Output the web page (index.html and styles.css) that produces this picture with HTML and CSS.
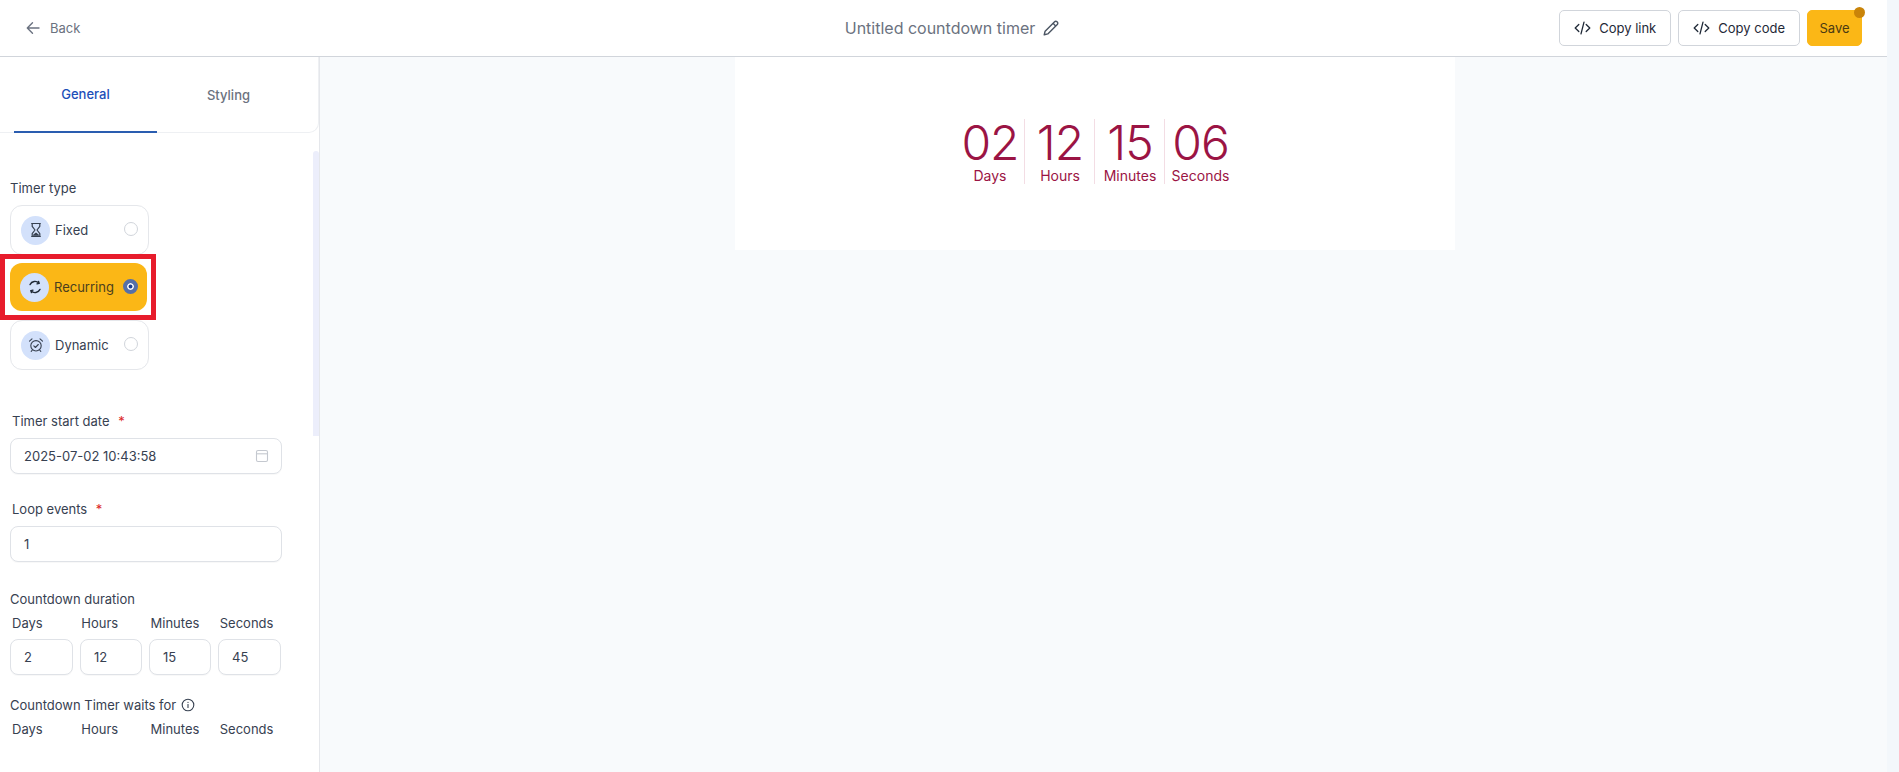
FILE: index.html
```html
<!DOCTYPE html>
<html lang="en">
<head>
  <meta charset="UTF-8">
  <title>Untitled countdown timer</title>
  <link rel="stylesheet" href="styles.css">
</head>
<body>

  <header class="topbar">
    <a class="back" href="#">
      <svg width="16" height="16" viewBox="0 0 16 16" fill="none" stroke="#6b7280" stroke-width="1.4" stroke-linecap="round" stroke-linejoin="round"><path d="M14 8H2.5M7.5 2.8 2.3 8l5.2 5.2"/></svg>
      <span>Back</span>
    </a>
    <div class="title">
      <span>Untitled countdown timer</span>
      <svg width="18" height="18" viewBox="0 0 18 18" fill="none" stroke="#4b5563" stroke-width="1.4" stroke-linejoin="round"><path d="M2.2 15.8l.9-3.6L12.6 2.7a1.6 1.6 0 0 1 2.3 0l.4.4a1.6 1.6 0 0 1 0 2.3L5.8 14.9z"/><path d="M11 4.3l2.7 2.7"/></svg>
    </div>
    <div class="actions">
      <button class="btn">
        <svg width="17" height="14" viewBox="0 0 17 14" fill="none" stroke="#1f2937" stroke-width="1.3" stroke-linecap="round" stroke-linejoin="round"><path d="M4.8 3.5 1.2 7l3.6 3.5M12.2 3.5 15.8 7l-3.6 3.5M10 1.2 7 12.8"/></svg>
        Copy link
      </button>
      <button class="btn">
        <svg width="17" height="14" viewBox="0 0 17 14" fill="none" stroke="#1f2937" stroke-width="1.3" stroke-linecap="round" stroke-linejoin="round"><path d="M4.8 3.5 1.2 7l3.6 3.5M12.2 3.5 15.8 7l-3.6 3.5M10 1.2 7 12.8"/></svg>
        Copy code
      </button>
      <button class="btn btn-save">Save<span class="dot"></span></button>
    </div>
  </header>

  <div class="main">
    <aside class="sidebar">
      <div class="tabs">
        <div class="tab active">General</div>
        <div class="tab">Styling</div>
      </div>
      <div class="scroll-thumb"></div>

      <form class="form">
        <div class="label label-type">Timer type</div>

        <div class="type-card">
          <span class="type-icon">
            <svg width="16" height="16" viewBox="0 0 16 16" fill="none" stroke="#374151" stroke-width="1.2" stroke-linejoin="round"><path d="M3.2 1.5h9.6M3.2 14.5h9.6M4.2 1.5v2.8L7 8l-2.8 3.7v2.8M11.8 1.5v2.8L9 8l2.8 3.7v2.8"/><path d="M5.5 13.2 8 11.2l2.5 2z" fill="#374151"/></svg>
          </span>
          <span class="type-name">Fixed</span>
          <span class="radio"></span>
        </div>

        <div class="highlight">
          <div class="type-card selected">
            <span class="type-icon">
              <svg width="16" height="16" viewBox="0 0 16 16" fill="none" stroke="#1f2937" stroke-width="1.3" stroke-linecap="round"><path d="M3 5.6A5.5 5.5 0 0 1 12 4.2"/><path d="M13 10.4A5.5 5.5 0 0 1 4 11.8"/><path d="M11.6 2.3l.5 2.1-2.1.5M4.4 13.7l-.5-2.1 2.1-.5" stroke-linejoin="round"/></svg>
            </span>
            <span class="type-name">Recurring</span>
            <span class="radio checked"></span>
          </div>
        </div>

        <div class="type-card">
          <span class="type-icon">
            <svg width="16" height="16" viewBox="0 0 16 16" fill="none" stroke="#374151" stroke-width="1.1" stroke-linecap="round" stroke-linejoin="round"><circle cx="8" cy="8.8" r="5.2"/><path d="M5.8 8.9l1.6 1.6 2.9-3M1.5 4.2 4 1.8M14.5 4.2 12 1.8M4.4 13l-1.2 1.4M11.6 13l1.2 1.4"/></svg>
          </span>
          <span class="type-name">Dynamic</span>
          <span class="radio"></span>
        </div>

        <div class="field field-date">
          <div class="label label-indent">Timer start date <span class="req">*</span></div>
          <div class="input">
            <span>2025-07-02 10:43:58</span>
            <svg width="14" height="14" viewBox="0 0 14 14" fill="none" stroke="#c4c8cf" stroke-width="1.1"><rect x="1.5" y="1.5" width="11" height="11" rx="1.5"/><path d="M1.5 4.8h11"/></svg>
          </div>
        </div>

        <div class="field field-loop">
          <div class="label label-indent">Loop events <span class="req">*</span></div>
          <div class="input"><span>1</span></div>
        </div>

        <div class="label label-duration">Countdown duration</div>
        <div class="units">
          <span>Days</span><span>Hours</span><span>Minutes</span><span>Seconds</span>
        </div>
        <div class="unit-inputs">
          <div class="input">2</div>
          <div class="input">12</div>
          <div class="input">15</div>
          <div class="input">45</div>
        </div>

        <div class="label label-waits">
          Countdown Timer waits for
          <svg width="14" height="14" viewBox="0 0 14 14" fill="none" stroke="#374151" stroke-width="1.1" stroke-linecap="round"><circle cx="7" cy="7" r="5.8"/><path d="M7 6.5v3"/><path d="M7 4.4v.1"/></svg>
        </div>
        <div class="units">
          <span>Days</span><span>Hours</span><span>Minutes</span><span>Seconds</span>
        </div>
      </form>
    </aside>

    <section class="preview">
      <div class="preview-card">
        <div class="timer">
          <div class="cell"><div class="num">02</div><div class="unit">Days</div></div>
          <div class="cell"><div class="num">12</div><div class="unit">Hours</div></div>
          <div class="cell"><div class="num">15</div><div class="unit">Minutes</div></div>
          <div class="cell"><div class="num">06</div><div class="unit">Seconds</div></div>
        </div>
      </div>
    </section>
  </div>

</body>
</html>
```

FILE: styles.css
```css
* {
  margin: 0;
  padding: 0;
  box-sizing: border-box;
  font-family: Inter, "Liberation Sans", sans-serif;
}

html, body {
  height: 100%;
  overflow: hidden;
}

body {
  background: #f8fafc;
  color: #374151;
  font-size: 13px;
  display: flex;
  flex-direction: column;
  border-right: 12px solid #f3f7fb;
}

/* Barra superior */
.topbar {
  height: 57px;
  flex: none;
  background: #fff;
  border-bottom: 1px solid #d1d5db;
  display: grid;
  grid-template-columns: 1fr auto 1fr;
  align-items: center;
  padding: 0 25px;
}

.back {
  display: flex;
  align-items: center;
  gap: 9px;
  color: #6b7280;
  font-size: 13px;
  text-decoration: none;
}

.title {
  display: flex;
  align-items: center;
  gap: 7px;
  color: #6b7280;
  font-size: 16px;
  margin-left: 18px;
}

.actions {
  display: flex;
  justify-content: flex-end;
  gap: 7px;
}

.btn {
  height: 36px;
  padding: 0 14px;
  display: flex;
  align-items: center;
  gap: 8px;
  background: #fff;
  border: 1px solid #d1d5db;
  border-radius: 5px;
  color: #1f2937;
  font-size: 13px;
  position: relative;
}

.btn-save {
  background: #fbb716;
  border-color: #fbb716;
  color: #4b3b12;
  width: 55px;
  justify-content: center;
  padding: 0;
}

.dot {
  position: absolute;
  top: -4px;
  right: -4px;
  width: 11px;
  height: 11px;
  border-radius: 50%;
  background: #c98409;
}

.main {
  flex: 1;
  display: flex;
  min-height: 0;
}

/* Panel lateral */
.sidebar {
  width: 320px;
  flex: none;
  background: #fff;
  border-right: 1px solid #e5e7eb;
  position: relative;
  overflow: hidden;
}

.tabs {
  height: 76px;
  display: flex;
  padding-left: 14px;
  border-bottom: 1px solid #eef0f3;
  border-bottom-right-radius: 10px;
  border-right: 1px solid #eef0f3;
}

.tab {
  width: 143px;
  display: flex;
  align-items: center;
  justify-content: center;
  color: #6b7280;
  font-size: 13px;
  font-weight: 500;
  margin-bottom: -1px;
  padding-bottom: 1px;
}

.tab.active {
  color: #1d4fb8;
  border-bottom: 2px solid #2a5db0;
  padding-bottom: 0;
}

.scroll-thumb {
  position: absolute;
  top: 94px;
  right: 0;
  width: 6px;
  height: 285px;
  background: #eceefb;
  border-radius: 3px 3px 0 0;
}

.form {
  padding: 0 0 0 10px;
  width: 282px;
}

.label {
  color: #374151;
  font-size: 13px;
  line-height: 16px;
}

.label-type {
  margin: 47px 0 9px;
}

.label-indent {
  margin-left: 2px;
  margin-bottom: 9px;
}

.req {
  color: #dc2626;
  margin-left: 5px;
}

.type-card {
  width: 139px;
  height: 50px;
  border: 1px solid #e5e7eb;
  border-radius: 12px;
  display: flex;
  align-items: center;
  padding-left: 10px;
  padding-right: 10px;
  background: #fff;
}

.type-icon {
  width: 29px;
  height: 29px;
  border-radius: 50%;
  background: #d3e1fb;
  display: flex;
  align-items: center;
  justify-content: center;
  flex: none;
}

.type-name {
  flex: 1;
  margin-left: 5px;
  font-size: 13px;
  color: #374151;
}

.radio {
  width: 14px;
  height: 14px;
  border-radius: 50%;
  border: 1px solid #d1d5db;
  background: #fff;
  flex: none;
  margin-top: -2px;
}

.radio.checked {
  background: #1d3f91;
  border: 4px solid #5670a8;
  box-shadow: inset 0 0 0 1.5px #fff;
  width: 15px;
  height: 15px;
}

/* Recuadro rojo alrededor de la opcion elegida */
.highlight {
  width: 156px;
  height: 66px;
  margin-left: -10px;
  margin-top: -1px;
  border: 5px solid #e71c2c;
  padding: 4px 5px;
  position: relative;
}

.type-card.selected {
  width: 137px;
  height: 48px;
  background: #fbb716;
  border: none;
  border-radius: 12px;
  padding-left: 10px;
  padding-right: 9px;
}

.type-card.selected .type-name {
  color: #4b3f1e;
}

.field-date {
  margin-top: 43px;
}

.field-loop {
  margin-top: 27px;
}

.input {
  height: 36px;
  border: 1px solid #dfe2e7;
  border-radius: 8px;
  background: #fff;
  display: flex;
  align-items: center;
  justify-content: space-between;
  padding: 0 12px 0 13px;
  color: #374151;
  font-size: 13px;
  box-shadow: 0 1px 1px rgba(0, 0, 0, 0.03);
}

.label-duration {
  margin-top: 29px;
}

.units {
  display: grid;
  grid-template-columns: repeat(4, 1fr);
  column-gap: 7px;
  padding-left: 2px;
  margin-top: 8px;
  line-height: 16px;
  color: #374151;
  font-size: 13px;
}

.unit-inputs {
  display: grid;
  grid-template-columns: 63px 62px 62px 63px;
  column-gap: 7px;
  margin-top: 8px;
}

.unit-inputs .input {
  padding-left: 13px;
}

.label-waits {
  margin-top: 22px;
  display: flex;
  align-items: center;
  gap: 5px;
}

/* Vista previa */
.preview {
  flex: 1;
  display: flex;
  justify-content: center;
  padding-right: 17px;
}

.preview-card {
  width: 720px;
  height: 193px;
  background: #fff;
  display: flex;
  justify-content: center;
  padding-top: 62px;
}

.timer {
  display: flex;
  height: 65px;
  color: #9b1444;
}

.cell {
  width: 70px;
  border-right: 1px solid #f3dde4;
  text-align: center;
  padding-left: 1px;
}

.cell:last-child {
  border-right: none;
}

.num {
  font-size: 48px;
  line-height: 48px;
  letter-spacing: -1px;
  font-weight: 300;
}

.unit {
  font-size: 14px;
  line-height: 17px;
}
```
